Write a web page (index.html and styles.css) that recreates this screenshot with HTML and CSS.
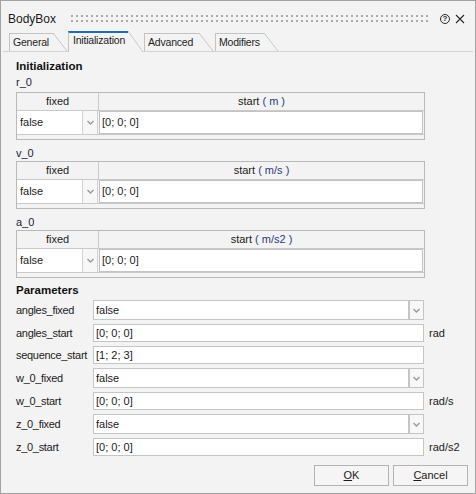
FILE: index.html
```html
<!DOCTYPE html>
<html>
<head>
<meta charset="utf-8">
<link rel="stylesheet" href="styles.css">
</head>
<body>
<div class="window">
  <div class="titlebar">
    <span class="title">BodyBox</span>
    <div class="grip"></div>
    <span class="help">?</span>
    <svg class="close" width="10" height="10" viewBox="0 0 10 10"><path d="M1 1 L9 9 M9 1 L1 9" stroke="#2a2a2a" stroke-width="1.1" fill="none"/></svg>
  </div>
  <div class="tabs">
    <div class="tab"><span class="tab-label w-general">General</span><span class="tab-slant"></span></div>
    <div class="tab active"><span class="tab-label w-init">Initialization</span><span class="tab-slant"></span></div>
    <div class="tab tab-adv"><span class="tab-label w-adv">Advanced</span><span class="tab-slant"></span></div>
    <div class="tab"><span class="tab-label w-mod">Modifiers</span><span class="tab-slant"></span></div>
  </div>
  <div class="content">
    <div class="section-title sec-init">Initialization</div>

    <div class="var-label first">r_0</div>
    <div class="vtable">
      <div class="vhead"><div class="vh-fixed">fixed</div><div class="vh-start">start <span class="u">( m )</span></div></div>
      <div class="vrow">
        <div class="vc-select">false</div>
        <div class="vc-arrow"><svg width="7" height="5" viewBox="0 0 7 5"><polyline points="0.5,1 3.5,4 6.5,1" fill="none" stroke="#9a9a9a" stroke-width="1.4"/></svg></div>
        <div class="vc-input">[0; 0; 0]</div>
      </div>
      <div class="vfoot"></div>
    </div>

    <div class="var-label">v_0</div>
    <div class="vtable">
      <div class="vhead"><div class="vh-fixed">fixed</div><div class="vh-start">start <span class="u">( m/s )</span></div></div>
      <div class="vrow">
        <div class="vc-select">false</div>
        <div class="vc-arrow"><svg width="7" height="5" viewBox="0 0 7 5"><polyline points="0.5,1 3.5,4 6.5,1" fill="none" stroke="#9a9a9a" stroke-width="1.4"/></svg></div>
        <div class="vc-input">[0; 0; 0]</div>
      </div>
      <div class="vfoot"></div>
    </div>

    <div class="var-label">a_0</div>
    <div class="vtable">
      <div class="vhead"><div class="vh-fixed">fixed</div><div class="vh-start">start <span class="u">( m/s2 )</span></div></div>
      <div class="vrow">
        <div class="vc-select">false</div>
        <div class="vc-arrow"><svg width="7" height="5" viewBox="0 0 7 5"><polyline points="0.5,1 3.5,4 6.5,1" fill="none" stroke="#9a9a9a" stroke-width="1.4"/></svg></div>
        <div class="vc-input">[0; 0; 0]</div>
      </div>
      <div class="vfoot"></div>
    </div>

    <div class="section-title sec-params">Parameters</div>
    <div class="params">
      <div class="plabel">angles_fixed</div>
      <div class="pselect"><div class="ps-box">false</div><div class="ps-btn"><svg width="7" height="5" viewBox="0 0 7 5"><polyline points="0.5,1 3.5,4 6.5,1" fill="none" stroke="#9a9a9a" stroke-width="1.4"/></svg></div></div>
      <div class="unit"></div>

      <div class="plabel">angles_start</div>
      <div class="pinput">[0; 0; 0]</div>
      <div class="unit">rad</div>

      <div class="plabel">sequence_start</div>
      <div class="pinput">[1; 2; 3]</div>
      <div class="unit"></div>

      <div class="plabel">w_0_fixed</div>
      <div class="pselect"><div class="ps-box">false</div><div class="ps-btn"><svg width="7" height="5" viewBox="0 0 7 5"><polyline points="0.5,1 3.5,4 6.5,1" fill="none" stroke="#9a9a9a" stroke-width="1.4"/></svg></div></div>
      <div class="unit"></div>

      <div class="plabel">w_0_start</div>
      <div class="pinput">[0; 0; 0]</div>
      <div class="unit">rad/s</div>

      <div class="plabel">z_0_fixed</div>
      <div class="pselect"><div class="ps-box">false</div><div class="ps-btn"><svg width="7" height="5" viewBox="0 0 7 5"><polyline points="0.5,1 3.5,4 6.5,1" fill="none" stroke="#9a9a9a" stroke-width="1.4"/></svg></div></div>
      <div class="unit"></div>

      <div class="plabel">z_0_start</div>
      <div class="pinput">[0; 0; 0]</div>
      <div class="unit">rad/s2</div>
    </div>
  </div>
  <div class="buttons">
    <div class="btn"><u>O</u>K</div>
    <div class="btn"><u>C</u>ancel</div>
  </div>
</div>
</body>
</html>
```

FILE: styles.css
```css
* { box-sizing: border-box; }
html, body { margin: 0; padding: 0; }
body {
  font-family: "Liberation Sans", Arial, sans-serif;
  font-size: 11px;
  color: #1b1b1b;
  background: #f3f3f3;
}
.window {
  width: 476px;
  height: 494px;
  border: 1px solid #a3a3a3;
  background: #f3f3f3;
  display: flex;
  flex-direction: column;
}

/* title bar */
.titlebar {
  height: 30px;
  flex: none;
  display: flex;
  align-items: flex-start;
}
.title {
  font-size: 12px;
  line-height: 14px;
  margin: 11px 0 0 7px;
  color: #1a1a1a;
}
.grip {
  flex: 1;
  height: 9px;
  margin: 14px 9px 0 15px;
  background-image: conic-gradient(at 2px 2px, transparent 75%, #a9a9a9 0);
  background-size: 5px 5px;
}
.help {
  width: 10px;
  height: 10px;
  margin-top: 13px;
  border: 1px solid #2a2a2a;
  border-radius: 50%;
  font-size: 8px;
  line-height: 8px;
  font-weight: bold;
  text-align: center;
  color: #2a2a2a;
}
.close {
  margin: 13px 10px 0 5px;
}

/* tabs */
.tabs {
  flex: none;
  height: 21px;
  margin: 0 2px;
  padding-left: 6px;
  display: flex;
  align-items: flex-end;
  border-bottom: 1px solid #d2d2d2;
}
.tab {
  display: flex;
  height: 18px;
  margin-right: 1px;
  font-size: 10.5px;
  letter-spacing: -0.2px;
  color: #1e1e1e;
}
.tab-adv { margin-right: 2px; }
.tab-label {
  border-top: 1px solid #c3c3c3;
  border-left: 1px solid #c3c3c3;
  padding-left: 3px;
  line-height: 16px;
  white-space: nowrap;
}
.tab-slant {
  width: 14px;
  background: linear-gradient(to top right, transparent calc(50% - 0.7px), #c3c3c3 50%, transparent calc(50% + 0.7px));
}
.w-general { width: 44px; }
.w-init { width: 60px; }
.w-adv { width: 55px; }
.w-mod { width: 49px; }
.tab.active {
  height: 21px;
  margin-bottom: -1px;
  background: #f3f3f3;
}
.tab.active .tab-label {
  border-top: 2px solid #1d6fa5;
  padding-left: 4px;
  line-height: 15px;
}
.tab.active .tab-slant { width: 15px; }

/* content */
.content {
  flex: none;
  padding-left: 15px;
}
.section-title {
  font-weight: bold;
  font-size: 11.5px;
  line-height: 14px;
  color: #111;
}
.sec-init { margin-top: 7px; }
.sec-params { margin-top: 5px; }
.var-label {
  line-height: 14px;
  margin-top: 6px;
  color: #1c1c3a;
}
.var-label.first {
  margin-top: 2px;
  margin-bottom: 3px;
}
.vtable {
  width: 409px;
  margin-top: 1px;
  border: 1px solid #b9b9b9;
  background: #f3f3f3;
}
.vhead {
  display: flex;
  height: 18px;
  border-bottom: 1px solid #c9c9c9;
  line-height: 17px;
}
.vh-fixed {
  width: 82px;
  border-right: 1px solid #c9c9c9;
  text-align: center;
}
.vh-start {
  flex: 1;
  text-align: center;
}
.u { color: #2a3c80; }
.vrow {
  display: flex;
  height: 24px;
  border-bottom: 1px solid #c9c9c9;
}
.vc-select {
  width: 65px;
  background: #fff;
  padding-left: 3px;
  line-height: 23px;
}
.vc-arrow {
  width: 16px;
  background: #f7f7f7;
  border-left: 1px solid #d3d3d3;
  border-right: 1px solid #d3d3d3;
  display: flex;
  align-items: center;
  justify-content: center;
}
.vc-input {
  flex: 1;
  margin: 0 1px 0 1px;
  background: #fff;
  border: 1px solid #c3c3c3;
  padding-left: 2px;
  line-height: 21px;
}
.vfoot { height: 4px; }

/* parameters */
.params {
  margin-top: 3px;
  display: grid;
  grid-template-columns: 77px 331px auto;
  row-gap: 4px;
  align-items: center;
}
.plabel {
  letter-spacing: -0.3px;
  line-height: 14px;
  white-space: nowrap;
}
.pselect {
  display: flex;
  height: 20px;
}
.ps-box {
  flex: 1;
  background: #fff;
  border: 1px solid #c5c5c5;
  padding-left: 2px;
  line-height: 18px;
}
.ps-btn {
  width: 15px;
  background: #f7f7f7;
  border: 1px solid #c5c5c5;
  display: flex;
  align-items: center;
  justify-content: center;
}
.pinput {
  height: 18px;
  background: #fff;
  border: 1px solid #c5c5c5;
  padding-left: 2px;
  line-height: 16px;
}
.unit {
  padding-left: 5px;
  line-height: 14px;
  white-space: nowrap;
}

/* buttons */
.buttons {
  flex: none;
  display: flex;
  justify-content: flex-end;
  gap: 4px;
  margin-top: 9px;
  padding-right: 7px;
}
.btn {
  width: 75px;
  height: 21px;
  border: 1px solid #b3b3b3;
  background: #f5f5f5;
  text-align: center;
  line-height: 19px;
  color: #1b1b1b;
}
.btn u { text-underline-offset: 1px; }
```
